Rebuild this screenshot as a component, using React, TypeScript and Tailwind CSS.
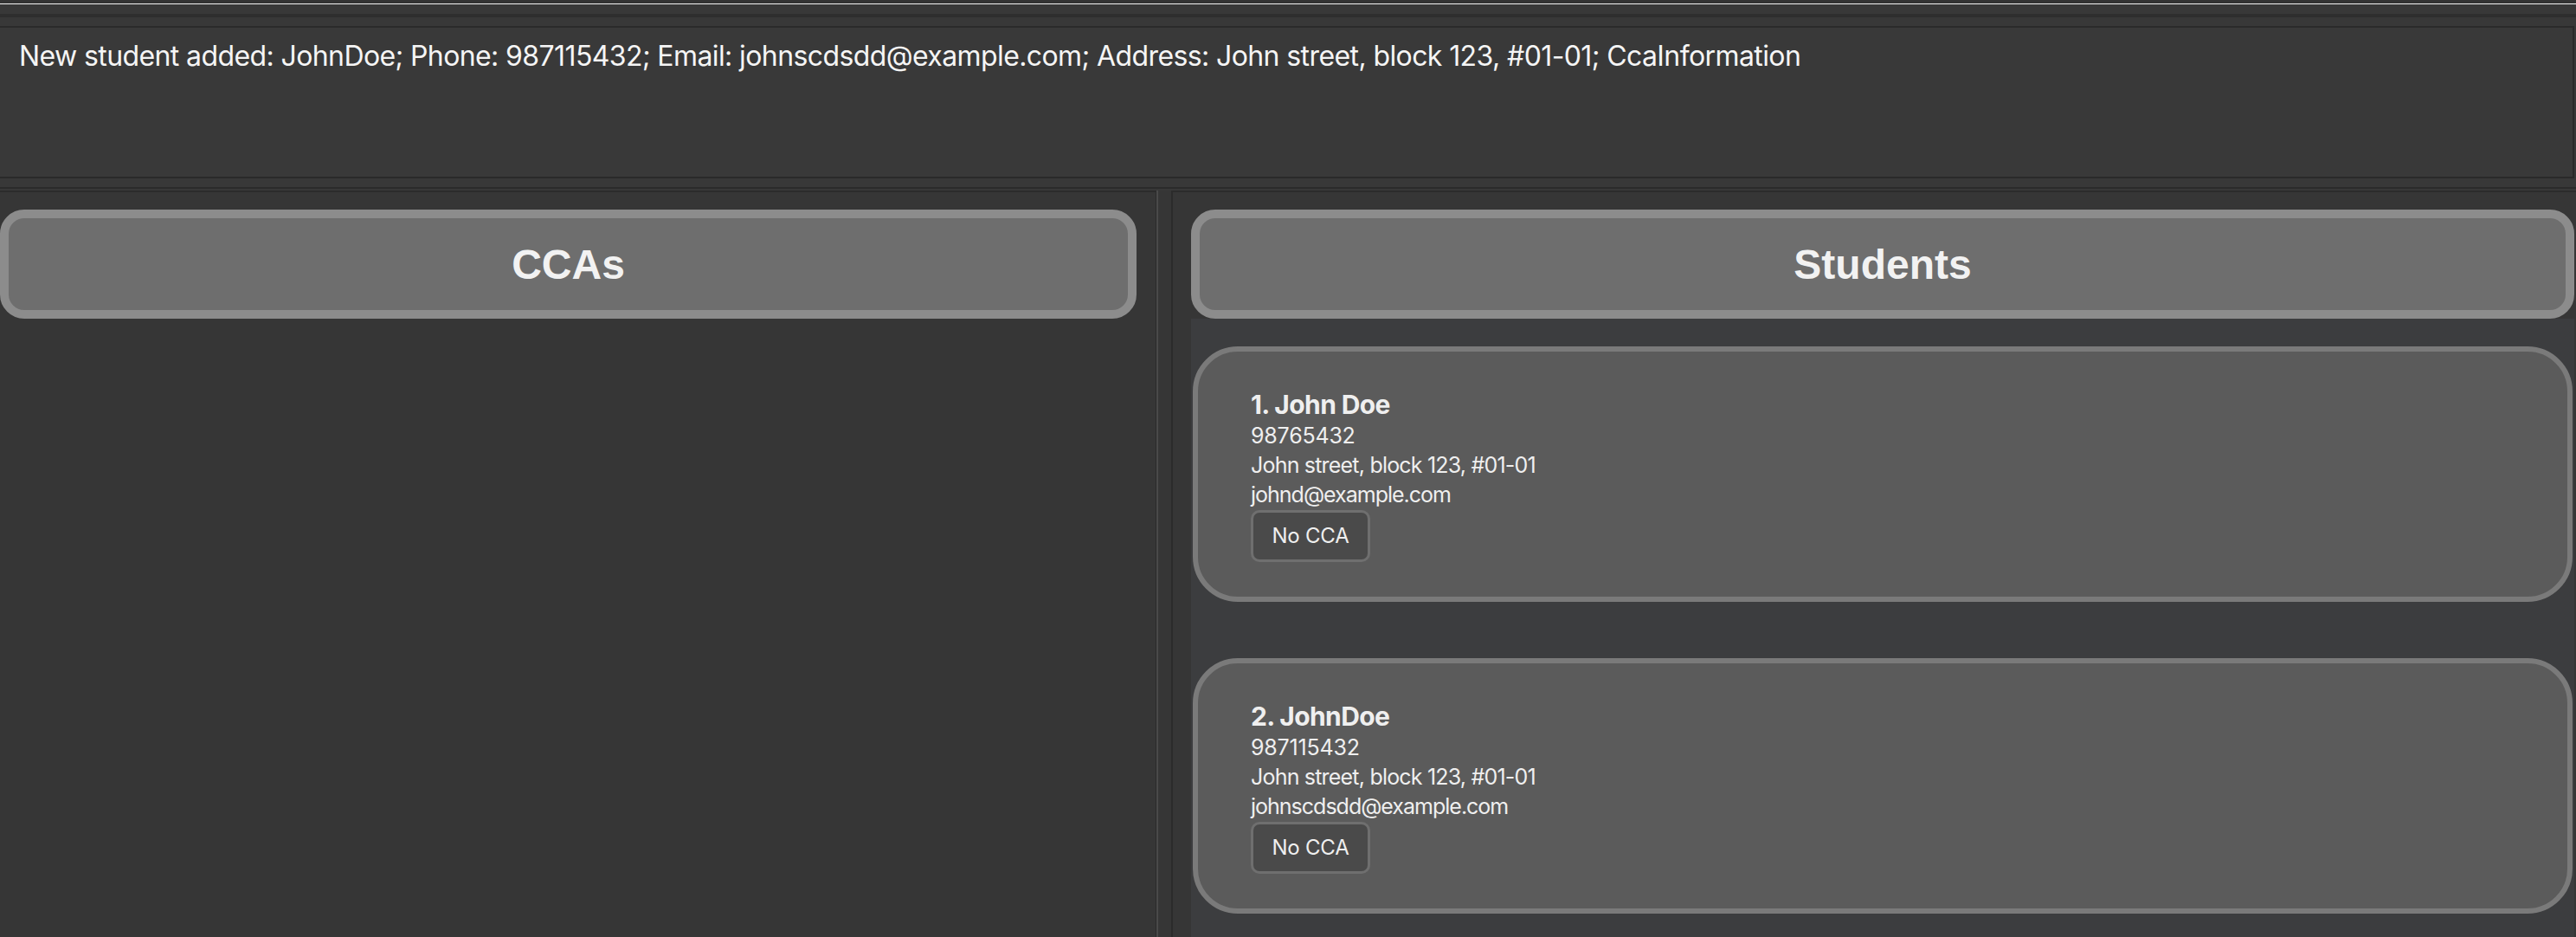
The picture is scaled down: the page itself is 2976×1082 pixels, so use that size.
import React from "react";

type Student = { name: string; phone: string; address: string; email: string };

const students: Student[] = [
  { name: "1. John Doe", phone: "98765432", address: "John street, block 123, #01-01", email: "johnd@example.com" },
  { name: "2. JohnDoe", phone: "987115432", address: "John street, block 123, #01-01", email: "johnscdsdd@example.com" },
];

function HeaderCard({ title }: { title: string }) {
  return (
    <div className="h-[126px] shrink-0 rounded-[28px] border-[10px] border-[#8c8c8c] bg-[#6e6e6e] flex items-center justify-center pt-[2px]">
      <span
        className="text-[48px] font-bold text-[#f2f2f2] leading-none"
        style={{ fontFamily: '"Liberation Sans", Arial, sans-serif' }}
      >
        {title}
      </span>
    </div>
  );
}

function StudentCard({ s }: { s: Student }) {
  return (
    <div className="h-[295px] shrink-0 rounded-[52px] border-[6px] border-[#7a7a7a] bg-[#5b5b5b] pl-[61px] pt-[43px] text-[#efefef]">
      <div className="text-[30px] font-bold leading-[36px] tracking-[-0.6px]">{s.name}</div>
      <div className="text-[25px] leading-[34px] tracking-[-0.2px] mt-[1px]">{s.phone}</div>
      <div className="text-[25px] leading-[34px] tracking-[-0.8px]">{s.address}</div>
      <div className="text-[25px] leading-[34px] tracking-[-1px]">{s.email}</div>
      <div className="mt-[1px] w-[138px] h-[60px] rounded-[10px] border-[3px] border-[#6f6f6f] bg-[#4a4a4a] flex items-center justify-center text-[24px] tracking-[-0.2px]">
        No CCA
      </div>
    </div>
  );
}

export default function App() {
  return (
    <div
      className="w-[2976px] h-[1082px] overflow-hidden bg-[#373737] flex flex-col"
      style={{ fontFamily: 'Inter, "Noto Sans", sans-serif' }}
    >
      <div className="h-[4px] shrink-0 bg-[#333333]" />
      <div className="h-[1px] shrink-0 bg-[#f4f4f4]" />
      <div className="h-[11px] shrink-0 bg-[#383838]" />
      <div className="h-[4px] shrink-0 bg-[#2e2e2e]" />
      <div className="h-[10px] shrink-0 bg-[#383838]" />
      <div className="h-[176px] shrink-0 mr-[2px] border-y-2 border-r-2 border-[#2a2a2a] bg-[#393939] pl-[22px] pt-[13px]">
        <div className="text-[32px] leading-[40px] text-[#f5f5f5] tracking-[-0.6px] whitespace-nowrap">
          New student added: JohnDoe; Phone: 987115432; Email: johnscdsdd@example.com; Address: John street, block 123, #01-01; CcaInformation
        </div>
      </div>
      <div className="h-[10px] shrink-0 bg-[#383838]" />
      <div className="h-[2px] shrink-0 bg-[#2b2b2b]" />
      <div className="h-[2px] shrink-0 bg-[#383838]" />
      <div className="flex-1 flex min-h-0">
        <div className="w-[1336px] shrink-0 border-t-2 border-r border-[#2b2b2b] bg-[#363636] pt-[20px] pr-[22px]">
          <HeaderCard title="CCAs" />
        </div>
        <div className="w-[17px] shrink-0 flex bg-[#363636]">
          <div className="w-[2px] bg-[#4a4a4a]" />
        </div>
        <div className="flex-1 flex flex-col border-t-2 border-l-2 border-[#2b2b2b] bg-[#363636] pt-[20px] pl-[21px] pr-[2px] min-h-0">
          <HeaderCard title="Students" />
          <div className="flex-1 bg-[#3c3d3f] px-[2px] pt-[32px] flex flex-col gap-[65px] overflow-hidden">
            {students.map((s) => (
              <StudentCard key={s.name} s={s} />
            ))}
          </div>
        </div>
      </div>
    </div>
  );
}
